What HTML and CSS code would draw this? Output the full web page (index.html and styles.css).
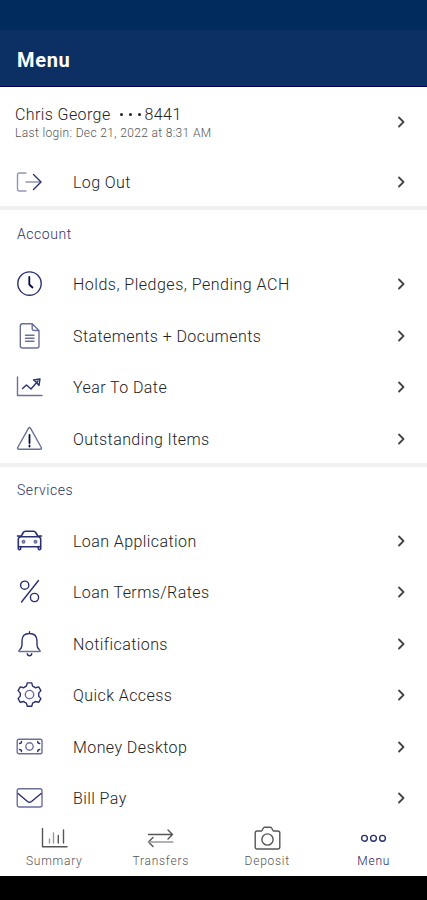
FILE: index.html
```html
<!DOCTYPE html>
<html lang="en">
<head>
<meta charset="utf-8">
<title>Menu</title>
<link rel="stylesheet" href="styles.css">
</head>
<body>
<div class="status"></div>
<header class="header"><h1>Menu</h1></header>
<main>
  <div class="user">
    <div>
      <div class="name"><span class="who">Chris George</span><span class="dots"><i></i><i></i><i></i></span><span class="num">8441</span></div>
      <div class="login">Last login: Dec 21, 2022 at 8:31 AM</div>
    </div>
    <svg class="chev" viewBox="0 0 10 14"><path d="M3 2.500l4.500 4.500-4.500 4.500"/></svg>
  </div>
  <div class="row">
    <svg class="icon" viewBox="0 0 27 26"><path class="soft" d="M10 4H3.500Q1.500 4 1.500 6v14q0 2 2 2H10M10 13h14"/><path d="M17.500 5.500l7.500 7.500-7.500 7.500"/></svg>
    <span class="label">Log Out</span>
    <svg class="chev" viewBox="0 0 10 14"><path d="M3 2.500l4.500 4.500-4.500 4.500"/></svg>
  </div>

  <section>
    <h2>Account</h2>
    <div class="row">
      <svg class="icon" viewBox="0 0 27 26"><circle cx="13.500" cy="12.600" r="11.700"/><path class="dark" d="M13.300 6v7.500l3.200 3"/></svg>
      <span class="label wide">Holds, Pledges, Pending ACH</span>
      <svg class="chev" viewBox="0 0 10 14"><path d="M3 2.500l4.500 4.500-4.500 4.500"/></svg>
    </div>
    <div class="row">
      <svg class="icon" viewBox="0 0 27 26"><path class="mid" d="M16 .8H6.500Q4.300.8 4.300 3v20q0 2 2.200 2h14.300q2.200 0 2.200-2V7.500L16.200.8v4.700q0 2 2 2H23M9.500 12.200h8.500M9.500 15.200h8.500M9.500 18.200h8.500"/></svg>
      <span class="label">Statements + Documents</span>
      <svg class="chev" viewBox="0 0 10 14"><path d="M3 2.500l4.500 4.500-4.500 4.500"/></svg>
    </div>
    <div class="row">
      <svg class="icon" viewBox="0 0 27 26"><path class="mid" d="M1.500 3v18.500H26"/><path d="M6.500 14.500l4-3.500 4.500 4 7-8M17.500 6l6.500-1-1 6.500M17.500 6l2.500 2M23 11.500l-2-2.500"/></svg>
      <span class="label">Year To Date</span>
      <svg class="chev" viewBox="0 0 10 14"><path d="M3 2.500l4.500 4.500-4.500 4.500"/></svg>
    </div>
    <div class="row">
      <svg class="icon" viewBox="0 0 27 26"><path class="mid" d="M12.400 2.300L1.700 21.500q-.6 1.700 1.200 1.700h21.200q1.800 0 1.200-1.700L14.600 2.300q-1.100-1.500-2.200 0z"/><path class="dark" d="M13.500 9v8M13.500 19.500v1"/></svg>
      <span class="label">Outstanding Items</span>
      <svg class="chev" viewBox="0 0 10 14"><path d="M3 2.500l4.500 4.500-4.500 4.500"/></svg>
    </div>
  </section>

  <section>
    <h2>Services</h2>
    <div class="row">
      <svg class="icon car" viewBox="0 0 27 26"><path d="M5 8.500l2.300-4Q8 3.200 9.500 3.200h8q1.500 0 2.200 1.300l2.300 4M1.500 8h2.500M23 8h2.500M5 8.700h17q2.700 0 2.700 2.800v7.200H2.300v-7.200q0-2.800 2.700-2.800zM2.300 18.500v2q0 1.200 1.200 1.200t1.200-1.200v-2M22.300 18.500v2q0 1.200 1.200 1.200t1.200-1.200v-2"/><circle class="mid" cx="7.500" cy="13.800" r="1.200"/><circle class="mid" cx="19.500" cy="13.800" r="1.200"/></svg>
      <span class="label">Loan Application</span>
      <svg class="chev" viewBox="0 0 10 14"><path d="M3 2.500l4.500 4.500-4.500 4.500"/></svg>
    </div>
    <div class="row">
      <svg class="icon" viewBox="0 0 27 26"><circle cx="8.700" cy="6.200" r="4.100"/><circle cx="18.500" cy="18.500" r="4.100"/><path d="M22.500 1.500L5.500 23"/></svg>
      <span class="label">Loan Terms/Rates</span>
      <svg class="chev" viewBox="0 0 10 14"><path d="M3 2.500l4.500 4.500-4.500 4.500"/></svg>
    </div>
    <div class="row">
      <svg class="icon" viewBox="0 0 27 26"><path d="M13.500.8v1.700M3.500 19q2.500-2 2.500-5V10Q6 2.500 13.500 2.500T21 10v4q0 3 2.500 5M11.300 22.700q.2 2 2.200 2t2.200-2"/><path class="mid" d="M3.500 19q-1.500 1.500 0 1.500h20q1.500 0 0-1.500"/></svg>
      <span class="label">Notifications</span>
      <svg class="chev" viewBox="0 0 10 14"><path d="M3 2.500l4.500 4.500-4.500 4.500"/></svg>
    </div>
    <div class="row">
      <svg class="icon" viewBox="0 0 27 26"><path d="M11.300.9h4.400l.9 3.200q1.700.6 2.700 1.600l3.400-.8 2.200 3.700-2.200 2.500v3l2.200 2.500-2.200 3.700-3.400-.8q-1 1-2.700 1.600l-.9 3.200h-4.400l-.9-3.200q-1.700-.6-2.700-1.600l-3.400.8-2.200-3.700 2.200-2.500v-3L2.100 8.600l2.200-3.700 3.400.8q1-1 2.700-1.600z"/><circle class="mid" cx="13.500" cy="12.600" r="4.200"/></svg>
      <span class="label">Quick Access</span>
      <svg class="chev" viewBox="0 0 10 14"><path d="M3 2.500l4.500 4.500-4.500 4.500"/></svg>
    </div>
    <div class="row">
      <svg class="icon" viewBox="0 0 27 26"><rect class="mid" x="1.200" y="5.200" width="24.800" height="14.600" rx="1.800"/><circle class="mid" cx="13.500" cy="12.500" r="3.700"/><path d="M3.500 9.500q2 0 2-2M23.700 9.500q-2 0-2-2M3.500 15.500q2 0 2 2M23.700 15.500q-2 0-2 2"/></svg>
      <span class="label">Money Desktop</span>
      <svg class="chev" viewBox="0 0 10 14"><path d="M3 2.500l4.500 4.500-4.500 4.500"/></svg>
    </div>
    <div class="row">
      <svg class="icon" viewBox="0 0 27 26"><rect class="mid" x="1.200" y="3.700" width="24.800" height="18.300" rx="2"/><path d="M2 8.500l9.500 8q2 1.500 4 0l9.700-8"/></svg>
      <span class="label">Bill Pay</span>
      <svg class="chev" viewBox="0 0 10 14"><path d="M3 2.500l4.500 4.500-4.500 4.500"/></svg>
    </div>
  </section>
</main>
<nav class="tabs">
  <div class="tab">
    <svg viewBox="0 0 27 26"><path d="M1.500 2.500v18.200H26"/><path class="soft" d="M8.500 13v4M12.500 7v10"/><path d="M17.300 9.500v7.500M22.500 4v13"/></svg>
    <span>Summary</span>
  </div>
  <div class="tab">
    <svg viewBox="0 0 27 26"><path d="M1.500 8.500h24M21 4L25.500 8.500 21 13M6 11.500L1.500 16 6 20.500"/><path class="soft" d="M1.500 16h24.500"/></svg>
    <span>Transfers</span>
  </div>
  <div class="tab">
    <svg viewBox="0 0 27 26"><path d="M3.200 5h4.500l1.700-3q.5-.8 1.500-.8h5.200q1 0 1.500.8l1.700 3h4.500q2 0 2 2v14q0 2-2 2H3.200q-2 0-2-2V7q0-2 2-2z"/><circle cx="13.500" cy="13.500" r="5.600"/></svg>
    <span>Deposit</span>
  </div>
  <div class="tab active">
    <svg viewBox="0 0 27 26"><circle cx="4.500" cy="12.300" r="2.900"/><circle cx="13.500" cy="12.300" r="2.900"/><circle cx="22.500" cy="12.300" r="2.900"/></svg>
    <span>Menu</span>
  </div>
</nav>
<div class="system"></div>
</body>
</html>
```
FILE: styles.css
```css
* { box-sizing: border-box; }
body {
  margin: 0;
  width: 427px;
  height: 900px;
  overflow: hidden;
  display: flex;
  flex-direction: column;
  background: #fff;
  color: #222;
  font-family: Roboto, "Liberation Sans", sans-serif;
}
.status { height: 30px; background: #002b5c; }
.header {
  height: 57px;
  padding: 3px 17px 0;
  display: flex;
  align-items: center;
  background: #0d3064;
  border-bottom: 1.5px solid #00004f;
}
h1 { margin: 0; font-size: 20px; line-height: 24px; font-weight: 700; color: #fff; letter-spacing: .7px; }
main { height: 735px; }
.user {
  height: 67.5px;
  padding: 4px 21px 0 15px;
  display: flex;
  align-items: center;
  justify-content: space-between;
}
.name { display: flex; align-items: center; font-size: 16px; line-height: 20px; font-weight: 300; letter-spacing: .4px; }
.dots { display: flex; gap: 6px; margin: 0 4px 0 9px; }
.dots i { width: 3px; height: 3px; border-radius: 50%; background: #222; }
.login { font-size: 12px; line-height: 16px; font-weight: 300; color: #555; letter-spacing: .35px; }
.user .chev { margin-top: -2px; }
.row {
  height: 51.5px;
  padding: 4px 21px 0 16px;
  display: flex;
  align-items: center;
}
.icon { width: 27px; height: 26px; margin-right: 30px; }
svg { fill: none; stroke: #29306f; stroke-width: 1.4; stroke-linecap: round; stroke-linejoin: round; display: block; overflow: visible; }
.car { stroke-width: 1.6; }
.soft { stroke: #9096b5; }
.mid { stroke: #6b7099; }
.dark { stroke: #070b40; stroke-width: 1.8; }
.label { flex: 1; padding-top: 2px; font-size: 16px; line-height: 20px; font-weight: 300; letter-spacing: .42px; }
.wide { letter-spacing: .5px; }
.chev { width: 10px; height: 14px; stroke: #444; stroke-width: 1.8; }
section { border-top: 4px solid #f0f0f1; }
h2 {
  margin: 0;
  height: 46.5px;
  padding: 1px 17px 0;
  display: flex;
  align-items: center;
  font-size: 14px;
  font-weight: 300;
  letter-spacing: .55px;
  color: #2d3268;
}
.tabs { height: 54px; padding-left: 1px; display: flex; }
.tab {
  flex: 1;
  display: flex;
  flex-direction: column;
  align-items: center;
  padding-top: 4px;
  font-size: 12px;
  font-weight: 300;
  line-height: 16px;
  letter-spacing: .75px;
  color: #555;
}
.tab svg { width: 27px; height: 26px; stroke: #555; margin-bottom: 1px; }
.tab .soft { stroke: #999; }
.tab.active { color: #1c2160; }
.tab.active svg { stroke: #29306f; }
.system { height: 24px; background: #000; }
```
